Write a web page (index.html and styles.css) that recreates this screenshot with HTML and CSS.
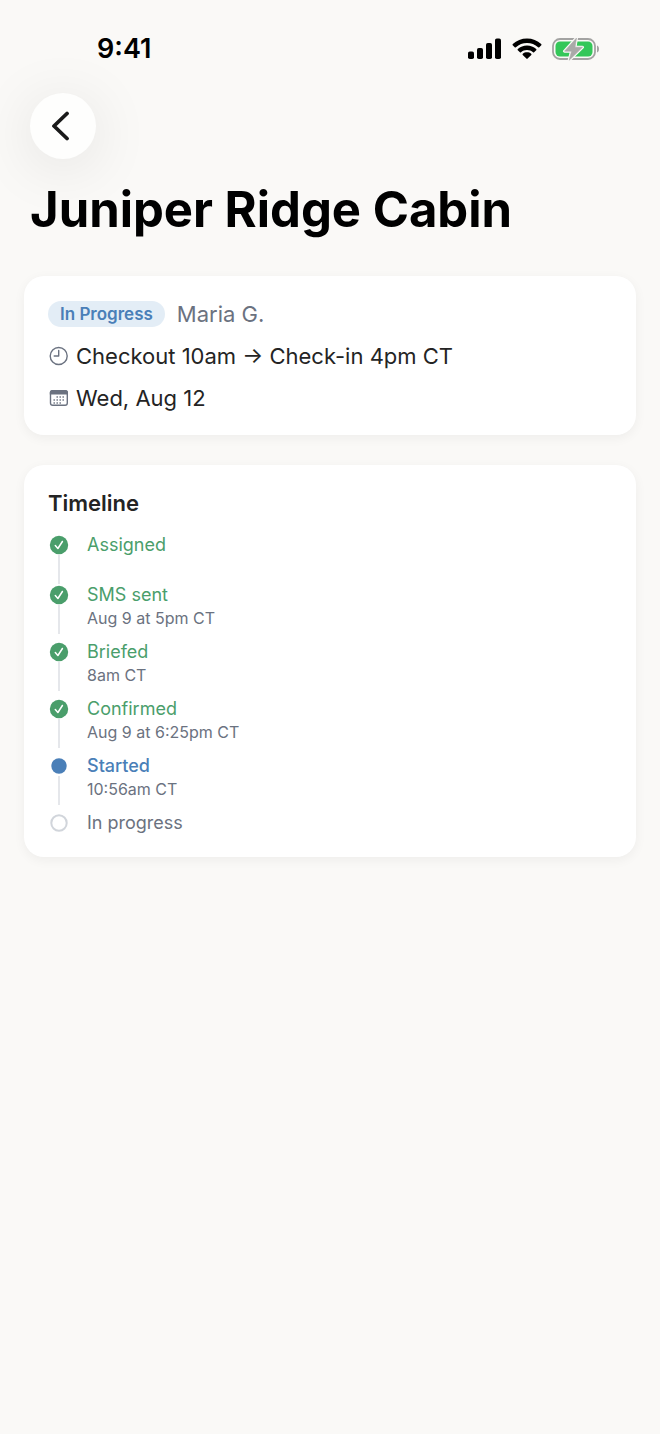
FILE: index.html
```
<!DOCTYPE html>
<html lang="en">
<head>
    <meta charset="UTF-8">
    <meta name="viewport" content="width=device-width, initial-scale=1.0">
    <title>Juniper Ridge Cabin</title>
    <link rel="stylesheet" href="styles.css">
</head>
<body>
    <div class="status-bar">
        <span class="time">9:41</span>
        <div class="status-icons">
            <svg width="34" height="22" viewBox="0 0 34 22" aria-hidden="true">
                <rect x="0" y="13.5" width="6" height="7.5" rx="1.8"/>
                <rect x="9" y="10" width="6" height="11" rx="1.8"/>
                <rect x="18" y="5" width="6" height="16" rx="1.8"/>
                <rect x="27" y="0.5" width="6" height="20.5" rx="1.8"/>
            </svg>
            <svg width="30" height="22" viewBox="0 0 30 22" aria-hidden="true">
                <path d="M15 .5C9.6.5 4.500 2.500.8 6c-.4.4-.4.800-.1 1.200l2 2c.3.3.8.3 1.200 0C6.900 6.400 10.800 4.900 15 4.900s8.100 1.500 11.100 4.300c.4.3.9.3 1.200 0l2-2c.3-.4.3-.8-.1-1.200C25.500 2.500 20.400.5 15 .5z"/>
                <path d="M15 7.500c-3.500 0-6.700 1.300-9.200 3.500-.4.4-.4.9 0 1.200l2.100 2.100c.3.3.8.3 1.100 0 1.600-1.400 3.700-2.300 6-2.300s4.400.9 6 2.300c.3.3.8.3 1.100 0l2.100-2.100c.4-.3.4-.8 0-1.200-2.500-2.200-5.700-3.500-9.200-3.500z"/>
                <path d="M15 14.300c-1.600 0-3 .5-4.200 1.400-.4.3-.4.8-.1 1.200l3.700 3.700c.4.4.8.4 1.200 0l3.700-3.700c.3-.4.3-.9-.1-1.200-1.200-.9-2.600-1.400-4.200-1.400z"/>
            </svg>
            <svg width="48" height="24" viewBox="0 0 48 24" aria-hidden="true">
                <rect x="1" y="2" width="42" height="20" rx="7" fill="none" stroke="#a3a3a2" stroke-width="1.8"/>
                <path d="M45 8.500c1.400.5 2 1.800 2 3.500s-.6 3-2 3.500z" fill="#a3a3a2"/>
                <rect x="3.5" y="4.5" width="37" height="15" rx="4.5" fill="#34c759"/>
                <path d="M24.500 1 12.500 14.200h7L17.200 23.200 30.500 10.200h-7.500z" fill="#faf9f7" stroke="#faf9f7" stroke-width="3" stroke-linejoin="round"/>
                <path d="M24.500 1 12.500 14.200h7L17.200 23.200 30.500 10.200h-7.500z" fill="#a9a9a8" stroke="#a9a9a8" stroke-width=".6" stroke-linejoin="round"/>
            </svg>
        </div>
    </div>

    <header class="header">
        <button class="back-btn" type="button" aria-label="Back">
            <svg width="20" height="30" viewBox="0 0 20 30" aria-hidden="true">
                <path d="M16 2.500 3 15l13 12.500"/>
            </svg>
        </button>
        <h1>Juniper Ridge Cabin</h1>
    </header>

    <main>
        <section class="card details">
            <div class="assignee">
                <span class="badge">In Progress</span>
                <span class="name">Maria G.</span>
            </div>
            <div class="detail">
                <svg width="22" height="20" viewBox="0 0 22 20" aria-hidden="true">
                    <circle cx="10.700" cy="10" r="8.500"/>
                    <path d="M10.700 4.500V10H6.200"/>
                </svg>
                <span>Checkout 10am → Check-in 4pm CT</span>
            </div>
            <div class="detail">
                <svg width="22" height="20" viewBox="0 0 22 20" aria-hidden="true">
                    <rect x="2.5" y="2.700" width="16.800" height="14.600" rx="2.200"/>
                    <path class="solid" d="M1.800 6.500V4.500C1.800 3 2.800 2 4.300 2h13.200c1.500 0 2.500 1 2.500 2.500v2z"/>
                    <path class="dots" d="M8.500 9h8M5.500 12h11M5.500 15h8"/>
                </svg>
                <span>Wed, Aug 12</span>
            </div>
        </section>

        <section class="card">
            <h2>Timeline</h2>
            <ol class="timeline">
                <li class="step done">
                    <div class="marker">
                        <svg width="20" height="20" viewBox="0 0 20 20" aria-hidden="true">
                            <circle cx="10" cy="10" r="9.200"/>
                            <path d="M6.300 10.600 8.900 13.500 13.400 6.500"/>
                        </svg>
                    </div>
                    <div class="step-text">
                        <p class="label">Assigned</p>
                    </div>
                </li>
                <li class="step done">
                    <div class="marker">
                        <svg width="20" height="20" viewBox="0 0 20 20" aria-hidden="true">
                            <circle cx="10" cy="10" r="9.200"/>
                            <path d="M6.300 10.600 8.900 13.500 13.400 6.500"/>
                        </svg>
                    </div>
                    <div class="step-text">
                        <p class="label">SMS sent</p>
                        <p class="when">Aug 9 at 5pm CT</p>
                    </div>
                </li>
                <li class="step done">
                    <div class="marker">
                        <svg width="20" height="20" viewBox="0 0 20 20" aria-hidden="true">
                            <circle cx="10" cy="10" r="9.200"/>
                            <path d="M6.300 10.600 8.900 13.500 13.400 6.500"/>
                        </svg>
                    </div>
                    <div class="step-text">
                        <p class="label">Briefed</p>
                        <p class="when">8am CT</p>
                    </div>
                </li>
                <li class="step done">
                    <div class="marker">
                        <svg width="20" height="20" viewBox="0 0 20 20" aria-hidden="true">
                            <circle cx="10" cy="10" r="9.200"/>
                            <path d="M6.300 10.600 8.900 13.500 13.400 6.500"/>
                        </svg>
                    </div>
                    <div class="step-text">
                        <p class="label">Confirmed</p>
                        <p class="when">Aug 9 at 6:25pm CT</p>
                    </div>
                </li>
                <li class="step current">
                    <div class="marker">
                        <svg width="20" height="20" viewBox="0 0 20 20" aria-hidden="true">
                            <circle cx="10" cy="10" r="7.700"/>
                        </svg>
                    </div>
                    <div class="step-text">
                        <p class="label">Started</p>
                        <p class="when">10:56am CT</p>
                    </div>
                </li>
                <li class="step pending">
                    <div class="marker">
                        <svg width="20" height="20" viewBox="0 0 20 20" aria-hidden="true">
                            <circle cx="10" cy="10" r="7.700"/>
                        </svg>
                    </div>
                    <div class="step-text">
                        <p class="label">In progress</p>
                    </div>
                </li>
            </ol>
        </section>
    </main>
</body>
</html>
```
FILE: styles.css
```
* {
    box-sizing: border-box;
}

body {
    margin: 0;
    font-family: Inter, "Liberation Sans", sans-serif;
    background-color: #faf9f7;
    color: #242424;
}

h1,
h2,
p,
ol {
    margin: 0;
    padding: 0;
}

svg {
    display: block;
    flex: none;
}

.status-bar {
    display: flex;
    justify-content: space-between;
    align-items: center;
    padding: 32px 60px 0 97px;
    color: #000;
}

.time {
    font-size: 27px;
    line-height: 34px;
    font-weight: 600;
}

.status-icons {
    display: flex;
    align-items: center;
    gap: 10px;
}

.header {
    padding: 27px 30px 0;
}

.back-btn {
    display: flex;
    align-items: center;
    justify-content: center;
    width: 66px;
    height: 66px;
    padding: 0 4px 0 0;
    border: none;
    border-radius: 50%;
    background-color: #fefefd;
    box-shadow: 0 8px 60px rgba(0, 0, 0, 0.1);
    cursor: pointer;
}

.back-btn path {
    fill: none;
    stroke: #1a1a1a;
    stroke-width: 3.8;
    stroke-linecap: round;
    stroke-linejoin: round;
}

h1 {
    margin-top: 21px;
    font-size: 49px;
    line-height: 60px;
    font-weight: 700;
    color: #000;
}

main {
    display: flex;
    flex-direction: column;
    gap: 30px;
    padding: 36px 24px;
}

.card {
    padding: 24px 24px 23px;
    border-radius: 20px;
    background-color: #fff;
    box-shadow: 0 3px 12px rgba(0, 0, 0, 0.05);
}

/* Booking details */
.details {
    display: flex;
    flex-direction: column;
    gap: 14px;
    font-size: 22px;
    line-height: 28px;
}

.assignee {
    display: flex;
    align-items: center;
    gap: 12px;
}

.badge {
    padding: 0 12px;
    border-radius: 13px;
    background-color: #e3edf6;
    color: #4a7fb8;
    font-size: 17px;
    line-height: 26px;
    font-weight: 600;
}

.name {
    color: #6b7280;
}

.detail {
    display: flex;
    align-items: center;
    gap: 6px;
}

.detail svg {
    fill: none;
    stroke: #6b7280;
    stroke-width: 1.4;
    stroke-linecap: round;
    stroke-linejoin: round;
}

.detail .solid {
    fill: #6b7280;
    stroke: none;
}

.detail .dots {
    stroke-width: 1.6;
    stroke-linecap: butt;
    stroke-dasharray: 1.4 1.6;
}

/* Timeline */
h2 {
    font-size: 22px;
    line-height: 28px;
    font-weight: 600;
}

.timeline {
    margin-top: 17px;
    list-style: none;
}

.step {
    display: flex;
    gap: 17px;
}

.marker {
    display: flex;
    flex-direction: column;
    align-items: center;
    width: 22px;
    padding-top: 1px;
}

.step:not(:last-child) .marker::after {
    content: "";
    width: 2px;
    height: 29px;
    background-color: #e5e7eb;
}

.done circle {
    fill: #4a9e6b;
}

.done path {
    fill: none;
    stroke: #fff;
    stroke-width: 1.5;
    stroke-linecap: round;
    stroke-linejoin: round;
}

.current circle {
    fill: #4a7fb8;
}

.pending circle {
    fill: none;
    stroke: #d1d5db;
    stroke-width: 2;
}

.label {
    font-size: 18px;
    line-height: 22px;
    color: #6b7280;
}

.done .label {
    color: #4a9e6b;
}

.current .label {
    color: #4a7fb8;
    font-weight: 500;
}

.when {
    padding-bottom: 11px;
    font-size: 16px;
    line-height: 24px;
    color: #6b7280;
}
```
